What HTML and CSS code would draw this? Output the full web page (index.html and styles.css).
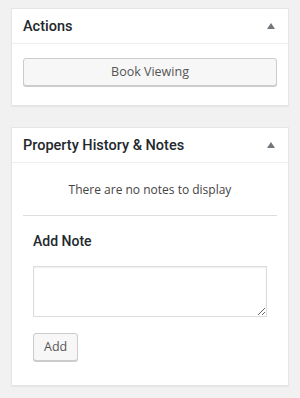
FILE: index.html
```html
<!DOCTYPE html>
<html>
<head>
<meta charset="utf-8">
<link rel="stylesheet" href="styles.css">
</head>
<body>
<div class="wrap">
  <div class="postbox">
    <div class="hndle">
      <h2 class="title">Actions</h2>
      <span class="toggle"></span>
    </div>
    <div class="inside inside-actions">
      <button class="button button-wide">Book Viewing</button>
    </div>
  </div>
  <div class="postbox">
    <div class="hndle">
      <h2 class="title">Property History &amp; Notes</h2>
      <span class="toggle"></span>
    </div>
    <div class="inside inside-notes">
      <p class="empty">There are no notes to display</p>
      <div class="add-note">
        <h4 class="add-title">Add Note</h4>
        <textarea class="note-field"></textarea>
        <div class="actions-row">
          <button class="button">Add</button>
        </div>
      </div>
    </div>
  </div>
</div>
</body>
</html>
```

FILE: styles.css
```css
html, body {
  margin: 0;
  padding: 0;
}
body {
  background: #f1f1f1;
  font-family: "Open Sans", "Noto Sans", sans-serif;
  color: #444;
  width: 300px;
  height: 398px;
  overflow: hidden;
}
.wrap {
  padding: 8px 11px 0;
  display: flex;
  flex-direction: column;
  gap: 21px;
}
.postbox {
  background: #fff;
  border: 1px solid #e5e5e5;
  box-shadow: 0 1px 1px rgba(0,0,0,0.04);
}
.hndle {
  height: 34px;
  border-bottom: 1px solid #eee;
  display: flex;
  align-items: center;
  justify-content: space-between;
  padding: 0 13px 0 11px;
}
.title {
  margin: 0;
  font-family: Roboto, "Open Sans", sans-serif;
  font-size: 14.5px;
  font-weight: 500;
  color: #23282d;
}
.toggle {
  width: 0;
  height: 0;
  border-left: 4px solid transparent;
  border-right: 4px solid transparent;
  border-bottom: 6px solid #72777c;
}
.inside {
  padding: 0 11px;
}
.inside-actions {
  padding-top: 14px;
  padding-bottom: 19px;
}
.button {
  display: block;
  height: 28px;
  box-sizing: border-box;
  background: #f7f7f7;
  border: 1px solid #ccc;
  border-radius: 3px;
  box-shadow: 0 1px 0 #ccc;
  color: #555;
  font-family: "Open Sans", "Noto Sans", sans-serif;
  font-size: 12.5px;
  padding: 0 10px;
  line-height: 26px;
}
.button-wide {
  width: 100%;
}
.empty {
  margin: 0;
  height: 52px;
  display: flex;
  align-items: center;
  justify-content: center;
  font-size: 12px;
  color: #444;
  border-bottom: 1px solid #ddd;
}
.add-note {
  padding: 0 10px 24px;
}
.add-title {
  margin: 0;
  padding-top: 15px;
  font-family: Roboto, "Open Sans", sans-serif;
  font-size: 14px;
  font-weight: 500;
  color: #23282d;
  line-height: 20px;
}
.note-field {
  display: block;
  margin-top: 15px;
  width: 234px;
  height: 51px;
  box-sizing: border-box;
  border: 1px solid #ddd;
  box-shadow: inset 0 1px 2px rgba(0,0,0,0.07);
  padding: 2px 6px;
  resize: vertical;
}
.actions-row {
  margin-top: 16px;
}
```
